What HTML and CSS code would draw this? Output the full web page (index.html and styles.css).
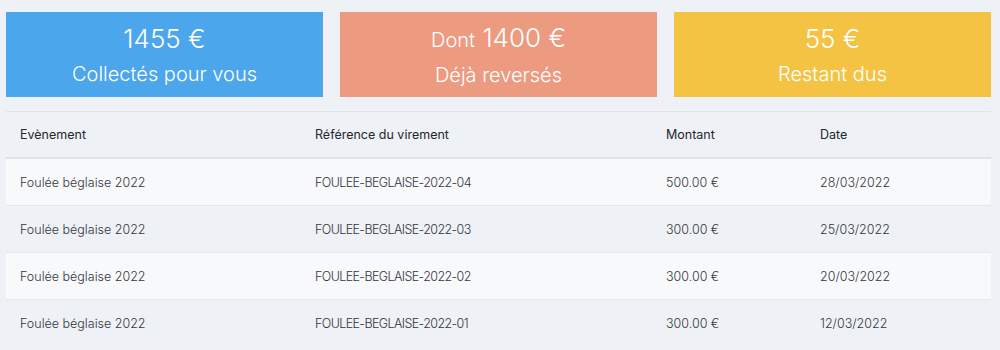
FILE: index.html
```html
<!DOCTYPE html>
<html lang="fr">
<head>
<meta charset="utf-8">
<link rel="stylesheet" href="styles.css">
</head>
<body>
<div class="page">
  <div class="cards">
    <div class="card card-blue">
      <div class="amount">1455 €</div>
      <div class="label">Collectés pour vous</div>
    </div>
    <div class="card card-salmon">
      <div class="amount"><span class="prefix">Dont</span> 1400 €</div>
      <div class="label">Déjà reversés</div>
    </div>
    <div class="card card-yellow">
      <div class="amount">55 €</div>
      <div class="label">Restant dus</div>
    </div>
  </div>
  <table class="transfers">
    <colgroup>
      <col class="c1"><col class="c2"><col class="c3"><col class="c4">
    </colgroup>
    <thead>
      <tr><th>Evènement</th><th>Référence du virement</th><th>Montant</th><th>Date</th></tr>
    </thead>
    <tbody>
      <tr><td>Foulée béglaise 2022</td><td class="ref">FOULEE-BEGLAISE-2022-04</td><td>500.00 €</td><td>28/03/2022</td></tr>
      <tr><td>Foulée béglaise 2022</td><td class="ref">FOULEE-BEGLAISE-2022-03</td><td>300.00 €</td><td>25/03/2022</td></tr>
      <tr><td>Foulée béglaise 2022</td><td class="ref">FOULEE-BEGLAISE-2022-02</td><td>300.00 €</td><td>20/03/2022</td></tr>
      <tr><td>Foulée béglaise 2022</td><td class="ref">FOULEE-BEGLAISE-2022-01</td><td>300.00 €</td><td>12/03/2022</td></tr>
    </tbody>
  </table>
</div>
</body>
</html>
```
FILE: styles.css
```css
html, body {
  margin: 0;
  padding: 0;
  background: #eef1f6;
  font-family: Inter, "Open Sans", sans-serif;
}
.page {
  padding: 12px 9px 0 6px;
}
.cards {
  display: grid;
  grid-template-columns: 1fr 1fr 1fr;
  gap: 17px;
}
.card {
  height: 85px;
  color: #fff;
  display: flex;
  flex-direction: column;
  align-items: center;
  justify-content: center;
  gap: 8px;
  font-weight: 350;
}
.card-blue { background: #4ca6ec; }
.card-salmon { background: #ec9b80; }
.card-yellow { background: #f4c344; }
.amount {
  font-size: 26px;
  line-height: 30px;
  margin-top: 1px;
}
.prefix {
  font-size: 20px;
}
.label {
  font-size: 20px;
  line-height: 24px;
}
.transfers {
  margin-top: 14px;
  width: 100%;
  border-collapse: collapse;
  table-layout: fixed;
  font-size: 12.5px;
  font-weight: 330;
  color: #33363b;
  border-top: 1px solid #e1e4e9;
}
.c1 { width: 295px; }
.c2 { width: 351px; }
.c3 { width: 154px; }
.c4 { width: auto; }
.transfers th {
  text-align: left;
  font-weight: 420;
  color: #24272b;
  padding: 0 14px;
  height: 45px;
  border-bottom: 2px solid #dfe2e7;
}
.transfers td {
  padding: 0 14px;
  height: 46px;
  border-bottom: 1px solid #e3e6ea;
}
.transfers td.ref {
  letter-spacing: -0.6px;
}
.transfers tbody tr:nth-child(odd) td {
  background: #f8f9fb;
}
.transfers tbody tr:last-child td {
  border-bottom: none;
}
```
